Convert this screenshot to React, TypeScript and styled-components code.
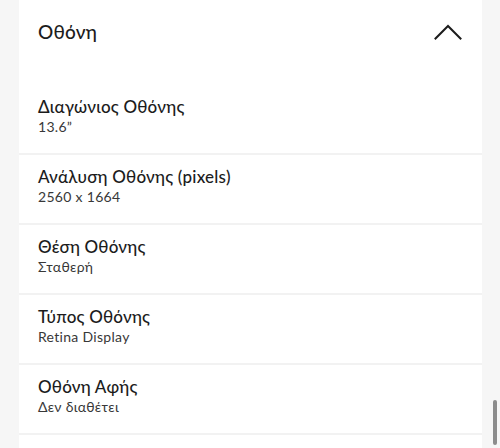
import React from "react";
import styled, { createGlobalStyle } from "styled-components";

const Global = createGlobalStyle`
  html, body { margin: 0; padding: 0; }
  body {
    background: #f6f6f6;
    font-family: Lato, "Noto Sans", sans-serif;
    color: #1f1f1f;
    overflow: hidden;
  }
`;

const Page = styled.div`
  position: relative;
  height: 448px;
  padding: 0 18px 0 19px;
  overflow: hidden;
`;

const Panel = styled.section`
  background: #ffffff;
  height: 448px;
`;

const Header = styled.div`
  display: flex;
  align-items: center;
  justify-content: space-between;
  height: 63px;
  padding: 0 20px 0 19px;
`;

const Title = styled.h2`
  margin: 0;
  font-size: 19px;
  font-weight: 500;
  letter-spacing: 0.2px;
  color: #1c1c1c;
`;

const Toggle = styled.button`
  border: 0;
  background: none;
  padding: 0;
  display: flex;
  cursor: pointer;
`;

const List = styled.div`
  padding-top: 22px;
`;

const Row = styled.div`
  padding: 11px 19px 0;
  height: 57px;
  border-bottom: 2px solid #f2f2f2;
  display: flex;
  flex-direction: column;
  gap: 0;
`;

const Label = styled.div`
  font-size: 17px;
  line-height: 22px;
  font-weight: 500;
  letter-spacing: 0.2px;
  color: #1c1c1c;
`;

const Value = styled.div`
  font-size: 14px;
  line-height: 18px;
  color: #383838;
  letter-spacing: 0.3px;
`;

const Thumb = styled.div`
  position: absolute;
  right: 3px;
  top: 400px;
  width: 4px;
  height: 45px;
  border-radius: 2px;
  background: #8c8c8c;
`;

const specs = [
  { label: "Διαγώνιος Οθόνης", value: "13.6\u201D" },
  { label: "Ανάλυση Οθόνης (pixels)", value: "2560 x 1664" },
  { label: "Θέση Οθόνης", value: "Σταθερή" },
  { label: "Τύπος Οθόνης", value: "Retina Display" },
  { label: "Οθόνη Αφής", value: "Δεν διαθέτει" },
];

export default function App() {
  return (
    <>
      <Global />
      <Page>
        <Panel>
          <Header>
            <Title>Οθόνη</Title>
            <Toggle aria-label="collapse">
              <svg width="28" height="16" viewBox="0 0 28 16" fill="none">
                <path d="M1.5 14.5 L14 2 L26.5 14.5" stroke="#1c1c1c" strokeWidth="2" strokeLinecap="square" />
              </svg>
            </Toggle>
          </Header>
          <List>
            {specs.map((s) => (
              <Row key={s.label}>
                <Label>{s.label}</Label>
                <Value>{s.value}</Value>
              </Row>
            ))}
          </List>
        </Panel>
        <Thumb />
      </Page>
    </>
  );
}
